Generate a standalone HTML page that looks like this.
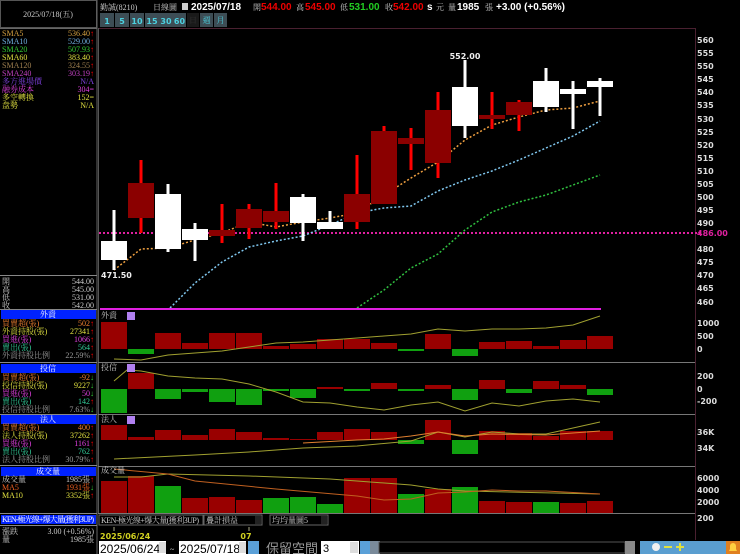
<!DOCTYPE html>
<html><head><meta charset="utf-8"><style>
html,body{margin:0;padding:0;background:#000;width:740px;height:554px;overflow:hidden}
svg{display:block}
.s{font-family:"Liberation Serif","Noto Serif CJK TC","Noto Serif CJK SC",serif;font-size:8px}
.b{font-family:"DejaVu Sans","Liberation Sans",sans-serif;font-size:8px;font-weight:bold}
.h{font-family:"Liberation Sans","Noto Sans CJK TC",sans-serif;font-size:10px;font-weight:bold}
</style></head><body>
<svg width="740" height="554" viewBox="0 0 740 554" xmlns="http://www.w3.org/2000/svg">
<rect width="740" height="554" fill="#000"/>
<rect x="0.5" y="0.5" width="96" height="27" fill="none" stroke="#555"/>
<text x="48" y="17" class="s" fill="#ccc" text-anchor="middle">2025/07/18(五)</text>
<line x1="97" y1="0" x2="97" y2="554" stroke="#666"/>
<line x1="0" y1="28.5" x2="97" y2="28.5" stroke="#666"/>
<g class="s">
<text x="2" y="36" fill="#d4a040">SMA5</text><text x="94" y="36" fill="#d4a040" text-anchor="end">536.40<tspan fill="#f00">↑</tspan></text>
<text x="2" y="44" fill="#70b0e0">SMA10</text><text x="94" y="44" fill="#70b0e0" text-anchor="end">529.00<tspan fill="#f00">↑</tspan></text>
<text x="2" y="52" fill="#3c3">SMA20</text><text x="94" y="52" fill="#3c3" text-anchor="end">507.93<tspan fill="#f00">↑</tspan></text>
<text x="2" y="60" fill="#e0e040">SMA60</text><text x="94" y="60" fill="#e0e040" text-anchor="end">383.40<tspan fill="#f00">↑</tspan></text>
<text x="2" y="68" fill="#a08050">SMA120</text><text x="94" y="68" fill="#a08050" text-anchor="end">324.55<tspan fill="#f00">↑</tspan></text>
<text x="2" y="76" fill="#c040c0">SMA240</text><text x="94" y="76" fill="#c040c0" text-anchor="end">303.19<tspan fill="#f00">↑</tspan></text>
<text x="2" y="84" fill="#8040e0">多方進場價</text><text x="94" y="84" fill="#8040e0" text-anchor="end">N/A</text>
<text x="2" y="92" fill="#e040e0">融券成本</text><text x="94" y="92" fill="#e040e0" text-anchor="end">304=</text>
<text x="2" y="100" fill="#e0e040">多空轉換</text><text x="94" y="100" fill="#e0e040" text-anchor="end">152=</text>
<text x="2" y="108" fill="#e0e040">盘勢</text><text x="94" y="108" fill="#e0e040" text-anchor="end">N/A</text>
</g>
<line x1="0" y1="275.5" x2="97" y2="275.5" stroke="#888"/>
<g class="s" fill="#ccc">
<text x="2" y="284">開</text><text x="94" y="284" text-anchor="end">544.00</text>
<text x="2" y="292">高</text><text x="94" y="292" text-anchor="end">545.00</text>
<text x="2" y="300">低</text><text x="94" y="300" text-anchor="end">531.00</text>
<text x="2" y="308">收</text><text x="94" y="308" text-anchor="end">542.00</text>
</g>
<line x1="0" y1="309.5" x2="97" y2="309.5" stroke="#888"/>
<rect x="1" y="310" width="95" height="9" fill="#0022ff"/>
<text x="48" y="317" class="s" fill="#fff" text-anchor="middle">外資</text>
<g class="s">
<text x="2" y="326" fill="#f08030">買賣超(張)</text><text x="94" y="326" fill="#f08030" text-anchor="end">502<tspan fill="#f00">↑</tspan></text>
<text x="2" y="334" fill="#e0e040">外資持股(張)</text><text x="94" y="334" fill="#e0e040" text-anchor="end">27341<tspan fill="#f00">↑</tspan></text>
<text x="2" y="342" fill="#e040e0">買進(張)</text><text x="94" y="342" fill="#e040e0" text-anchor="end">1066<tspan fill="#f00">↑</tspan></text>
<text x="2" y="350" fill="#3c9">賣出(張)</text><text x="94" y="350" fill="#3c9" text-anchor="end">564<tspan fill="#f00">↑</tspan></text>
<text x="2" y="358" fill="#999">外資持股比例</text><text x="94" y="358" fill="#999" text-anchor="end">22.59%<tspan fill="#f00">↑</tspan></text>
</g>
<line x1="0" y1="362.5" x2="97" y2="362.5" stroke="#888"/>
<rect x="1" y="364" width="95" height="9" fill="#0022ff"/>
<text x="48" y="371" class="s" fill="#fff" text-anchor="middle">投信</text>
<g class="s">
<text x="2" y="380" fill="#f08030">買賣超(張)</text><text x="94" y="380" fill="#f08030" text-anchor="end">-92<tspan fill="#3c3">↓</tspan></text>
<text x="2" y="388" fill="#e0e040">投信持股(張)</text><text x="94" y="388" fill="#e0e040" text-anchor="end">9227<tspan fill="#3c3">↓</tspan></text>
<text x="2" y="396" fill="#e040e0">買進(張)</text><text x="94" y="396" fill="#e040e0" text-anchor="end">50<tspan fill="#3c3">↓</tspan></text>
<text x="2" y="404" fill="#3c9">賣出(張)</text><text x="94" y="404" fill="#3c9" text-anchor="end">142<tspan fill="#f00">↑</tspan></text>
<text x="2" y="412" fill="#999">投信持股比例</text><text x="94" y="412" fill="#999" text-anchor="end">7.63%<tspan fill="#3c3">↓</tspan></text>
</g>
<line x1="0" y1="414.5" x2="97" y2="414.5" stroke="#888"/>
<rect x="1" y="415" width="95" height="9" fill="#0022ff"/>
<text x="48" y="422" class="s" fill="#fff" text-anchor="middle">法人</text>
<g class="s">
<text x="2" y="430" fill="#f08030">買賣超(張)</text><text x="94" y="430" fill="#f08030" text-anchor="end">400<tspan fill="#f00">↑</tspan></text>
<text x="2" y="438" fill="#e0e040">法人持股(張)</text><text x="94" y="438" fill="#e0e040" text-anchor="end">37262<tspan fill="#f00">↑</tspan></text>
<text x="2" y="446" fill="#e040e0">買進(張)</text><text x="94" y="446" fill="#e040e0" text-anchor="end">1161<tspan fill="#f00">↑</tspan></text>
<text x="2" y="454" fill="#3c9">賣出(張)</text><text x="94" y="454" fill="#3c9" text-anchor="end">762<tspan fill="#f00">↑</tspan></text>
<text x="2" y="462" fill="#999">法人持股比例</text><text x="94" y="462" fill="#999" text-anchor="end">30.79%<tspan fill="#f00">↑</tspan></text>
</g>
<line x1="0" y1="465.5" x2="97" y2="465.5" stroke="#888"/>
<rect x="1" y="467" width="95" height="9" fill="#0022ff"/>
<text x="48" y="474" class="s" fill="#fff" text-anchor="middle">成交量</text>
<g class="s">
<text x="2" y="482" fill="#ccc">成交量</text><text x="94" y="482" fill="#ccc" text-anchor="end">1985張<tspan fill="#f00">↑</tspan></text>
<text x="2" y="490" fill="#f06020">MA5</text><text x="94" y="490" fill="#f06020" text-anchor="end">1931張<tspan fill="#3c3">↓</tspan></text>
<text x="2" y="498" fill="#e0e040">MA10</text><text x="94" y="498" fill="#e0e040" text-anchor="end">3352張<tspan fill="#f00">↑</tspan></text>
</g>
<line x1="0" y1="513.5" x2="97" y2="513.5" stroke="#888"/>
<rect x="1" y="515" width="95" height="9" fill="#0022ff"/>
<text x="2" y="522" class="s" fill="#fff" textLength="92">KEN-極光線+爆大量(獲利3UP)</text>
<line x1="0" y1="525.5" x2="97" y2="525.5" stroke="#888"/>
<g class="s" fill="#ccc">
<text x="2" y="534">漲跌</text><text x="94" y="534" text-anchor="end">3.00 (+0.56%)</text>
<text x="2" y="542">量</text><text x="94" y="542" text-anchor="end">1985張</text>
</g>

<g class="s" fill="#ccc">
<text x="100" y="10">勤誠(8210)</text><text x="153" y="10">日線圖</text>
</g>
<rect x="182" y="3" width="6" height="7" fill="#ccc"/>
<text x="191" y="10" class="h" fill="#fff">2025/07/18</text>
<text x="253" y="10" class="s" fill="#ccc">開</text><text x="261" y="10" class="h" fill="#e00">544.00</text>
<text x="296" y="10" class="s" fill="#ccc">高</text><text x="305" y="10" class="h" fill="#e00">545.00</text>
<text x="340" y="10" class="s" fill="#ccc">低</text><text x="349" y="10" class="h" fill="#2c2">531.00</text>
<text x="385" y="10" class="s" fill="#ccc">收</text><text x="393" y="10" class="h" fill="#e00">542.00</text>
<text x="427" y="10" class="h" fill="#fff">s</text><text x="436" y="10" class="s" fill="#ccc">元</text>
<text x="448" y="10" class="s" fill="#ccc">量</text><text x="457" y="10" class="h" fill="#fff">1985</text>
<text x="485" y="10" class="s" fill="#ccc">張</text>
<text x="496" y="10" class="h" fill="#fff">+3.00 (+0.56%)</text>
<g>
<rect x="100" y="13" width="14" height="14" fill="#3d4d55"/>
<rect x="115" y="13" width="14" height="14" fill="#3d4d55"/>
<rect x="130" y="13" width="14" height="14" fill="#3d4d55"/>
<rect x="145" y="13" width="14" height="14" fill="#3d4d55"/>
<rect x="159" y="13" width="14" height="14" fill="#3d4d55"/>
<rect x="173" y="13" width="13" height="14" fill="#3d4d55"/>
<rect x="187" y="13" width="12" height="14" fill="#1a1a1a"/>
<rect x="200" y="13" width="13" height="14" fill="#3d4d55"/>
<rect x="214" y="13" width="13" height="14" fill="#3d4d55"/>
</g>
<g class="b" fill="#4cd0e0" text-anchor="middle" font-size="9">
<text x="107" y="24">1</text><text x="122" y="24">5</text><text x="137" y="24">10</text><text x="152" y="24">15</text><text x="166" y="24">30</text><text x="179.5" y="24">60</text>
</g>
<g class="s" fill="#4cd0e0" text-anchor="middle"><text x="206.5" y="23">週</text><text x="220.5" y="23">月</text></g>
<text x="193" y="23" class="s" fill="#333" text-anchor="middle">日</text>

<line x1="98" y1="28.5" x2="695" y2="28.5" stroke="#4a2030"/>
<line x1="695.5" y1="28" x2="695.5" y2="540" stroke="#4a2030"/>
<line x1="98.5" y1="28" x2="98.5" y2="513" stroke="#555"/>

<g class="b" fill="#ddd">
<text x="697" y="43">560</text><text x="697" y="56">555</text><text x="697" y="69">550</text><text x="697" y="82">545</text><text x="697" y="95">540</text><text x="697" y="108">535</text><text x="697" y="122">530</text><text x="697" y="135">525</text><text x="697" y="148">520</text><text x="697" y="161">515</text><text x="697" y="174">510</text><text x="697" y="187">505</text><text x="697" y="200">500</text><text x="697" y="213">495</text><text x="697" y="226">490</text><text x="697" y="252">480</text><text x="697" y="265">475</text><text x="697" y="278">470</text><text x="697" y="291">465</text><text x="697" y="305">460</text>
</g>
<line x1="99" y1="233" x2="700" y2="233" stroke="#e020a0" stroke-width="2" stroke-dasharray="2 2"/>
<text x="697" y="236" class="b" fill="#e020a0">486.00</text>

<polyline fill="none" stroke="#f0a040" stroke-width="1.5" stroke-dasharray="2 2" points="114,270 141,249 168,248 195,240 222,233 249,222 276,227 303,222 330,218 357,213 384,195 411,178 438,162 465,140 492,125 519,117 546,110 573,108 600,101"/>
<polyline fill="none" stroke="#80c8f0" stroke-width="1.5" stroke-dasharray="2 2" points="170,308 195,283 222,262 249,247 276,241 303,236 330,225 357,213 384,208 411,206 438,191 465,180 492,171 519,160 546,148 573,136 600,121"/>
<polyline fill="none" stroke="#30c040" stroke-width="1.5" stroke-dasharray="2 2" points="357,308 384,290 411,268 438,254 465,230 492,212 519,202 546,195 573,185 600,175"/>
<line x1="100" y1="309" x2="601" y2="309" stroke="#e020e0" stroke-width="2"/>

<g>
<rect x="112.5" y="210" width="3" height="60" fill="#fff"/><rect x="101" y="241" width="26" height="19" fill="#fff"/>
<rect x="139.5" y="160" width="3" height="73" fill="#f00"/><rect x="128" y="183" width="26" height="35" fill="#8b0000"/>
<rect x="166.5" y="184" width="3" height="68" fill="#fff"/><rect x="155" y="194" width="26" height="55" fill="#fff"/>
<rect x="193.5" y="223" width="3" height="38" fill="#fff"/><rect x="182" y="229" width="26" height="11" fill="#fff"/>
<rect x="220.5" y="204" width="3" height="39" fill="#f00"/><rect x="209" y="230" width="26" height="6" fill="#8b0000"/>
<rect x="247.5" y="204" width="3" height="35" fill="#f00"/><rect x="236" y="209" width="26" height="19" fill="#8b0000"/>
<rect x="274.5" y="183" width="3" height="46" fill="#f00"/><rect x="263" y="211" width="26" height="11" fill="#8b0000"/>
<rect x="301.5" y="194" width="3" height="47" fill="#fff"/><rect x="290" y="197" width="26" height="26" fill="#fff"/>
<rect x="328.5" y="211" width="3" height="18" fill="#fff"/><rect x="317" y="222" width="26" height="7" fill="#fff"/>
<rect x="355.5" y="155" width="3" height="74" fill="#f00"/><rect x="344" y="194" width="26" height="28" fill="#8b0000"/>
<rect x="382.5" y="126" width="3" height="78" fill="#f00"/><rect x="371" y="131" width="26" height="73" fill="#8b0000"/>
<rect x="409.5" y="128" width="3" height="42" fill="#f00"/><rect x="398" y="138" width="26" height="6" fill="#8b0000"/>
<rect x="436.5" y="92" width="3" height="86" fill="#f00"/><rect x="425" y="110" width="26" height="53" fill="#8b0000"/>
<rect x="463.5" y="60" width="3" height="78" fill="#fff"/><rect x="452" y="87" width="26" height="39" fill="#fff"/>
<rect x="490.5" y="92" width="3" height="37" fill="#f00"/><rect x="479" y="115" width="26" height="4" fill="#8b0000"/>
<rect x="517.5" y="100" width="3" height="31" fill="#f00"/><rect x="506" y="102" width="26" height="13" fill="#8b0000"/>
<rect x="544.5" y="68" width="3" height="44" fill="#fff"/><rect x="533" y="81" width="26" height="26" fill="#fff"/>
<rect x="571.5" y="81" width="3" height="48" fill="#fff"/><rect x="560" y="89" width="26" height="5" fill="#fff"/>
<rect x="598.5" y="78" width="3" height="38" fill="#fff"/><rect x="587" y="81" width="26" height="6" fill="#fff"/>
</g>
<text x="465" y="59" class="b" fill="#eee" text-anchor="middle">552.00</text>
<text x="101" y="278" class="b" fill="#eee">471.50</text>

<g stroke="#777"><line x1="98" y1="362.5" x2="695" y2="362.5"/><line x1="98" y1="414.5" x2="695" y2="414.5"/><line x1="98" y1="466.5" x2="695" y2="466.5"/><line x1="98" y1="513.5" x2="695" y2="513.5"/></g>

<g fill="#990000">
<rect x="101" y="322" width="26" height="27"/><rect x="155" y="333" width="26" height="16"/><rect x="182" y="343" width="26" height="6"/><rect x="209" y="333" width="26" height="16"/><rect x="236" y="333" width="26" height="16"/><rect x="263" y="346" width="26" height="3"/><rect x="290" y="344" width="26" height="5"/><rect x="317" y="339" width="26" height="10"/><rect x="344" y="339" width="26" height="10"/><rect x="371" y="343" width="26" height="6"/><rect x="425" y="334" width="26" height="15"/><rect x="479" y="342" width="26" height="7"/><rect x="506" y="341" width="26" height="8"/><rect x="533" y="346" width="26" height="3"/><rect x="560" y="340" width="26" height="9"/><rect x="587" y="336" width="26" height="13"/>
</g>
<g fill="#10a010"><rect x="128" y="349" width="26" height="5"/><rect x="398" y="349" width="26" height="2"/><rect x="452" y="349" width="26" height="7"/></g>
<polyline fill="none" stroke="#a0a030" points="114,359 141,360 168,355 195,353 222,351 249,347 276,343 303,342 330,340 357,338 384,336 411,334 438,329 465,331 492,329 519,329 546,328 573,325 600,316"/>
<text x="101" y="318" class="s" fill="#ccc">外資</text><rect x="127" y="312" width="8" height="8" fill="#b080f0"/>
<g class="b" fill="#ddd"><text x="697" y="326">1000</text><text x="697" y="339">500</text><text x="697" y="352">0</text></g>

<g fill="#990000"><rect x="128" y="373" width="26" height="16"/><rect x="317" y="387" width="26" height="2"/><rect x="371" y="383" width="26" height="6"/><rect x="425" y="385" width="26" height="4"/><rect x="479" y="380" width="26" height="9"/><rect x="533" y="381" width="26" height="8"/><rect x="560" y="385" width="26" height="4"/></g>
<g fill="#10a010"><rect x="101" y="389" width="26" height="24"/><rect x="155" y="389" width="26" height="10"/><rect x="182" y="389" width="26" height="3"/><rect x="209" y="389" width="26" height="13"/><rect x="236" y="389" width="26" height="16"/><rect x="263" y="389" width="26" height="2"/><rect x="290" y="389" width="26" height="9"/><rect x="344" y="389" width="26" height="2"/><rect x="398" y="389" width="26" height="2"/><rect x="452" y="389" width="26" height="11"/><rect x="506" y="389" width="26" height="4"/><rect x="587" y="389" width="26" height="6"/></g>
<polyline fill="none" stroke="#a0a030" points="114,381 127,370 141,371 168,376 195,378 222,379 249,384 276,392 303,402 330,403 357,407 384,410 411,405 438,402 465,411 492,403 519,406 546,401 573,399 600,402"/>
<text x="101" y="370" class="s" fill="#ccc">投信</text><rect x="127" y="364" width="8" height="8" fill="#b080f0"/>
<g class="b" fill="#ddd"><text x="697" y="379">200</text><text x="697" y="392">0</text><text x="697" y="404">-200</text></g>

<g fill="#990000"><rect x="101" y="425" width="26" height="15"/><rect x="128" y="437" width="26" height="3"/><rect x="155" y="430" width="26" height="10"/><rect x="182" y="435" width="26" height="5"/><rect x="209" y="429" width="26" height="11"/><rect x="236" y="432" width="26" height="8"/><rect x="263" y="438" width="26" height="2"/><rect x="290" y="439" width="26" height="1"/><rect x="317" y="432" width="26" height="8"/><rect x="344" y="429" width="26" height="11"/><rect x="371" y="432" width="26" height="8"/><rect x="425" y="420" width="26" height="20"/><rect x="479" y="431" width="26" height="9"/><rect x="506" y="433" width="26" height="7"/><rect x="533" y="436" width="26" height="4"/><rect x="560" y="431" width="26" height="9"/><rect x="587" y="431" width="26" height="9"/></g>
<g fill="#10a010"><rect x="398" y="440" width="26" height="4"/><rect x="452" y="440" width="26" height="14"/></g>
<polyline fill="none" stroke="#a0a030" points="114,459 195,455 249,452 303,448 357,446 411,441 438,432 465,437 492,432 519,434 546,434 573,428 600,422"/>
<polyline fill="none" stroke="#e08030" points="303,443 357,440 384,439 411,436 438,432 465,436 492,434 546,435 600,431"/>
<text x="101" y="422" class="s" fill="#ccc">法人</text><rect x="127" y="416" width="8" height="8" fill="#b080f0"/>
<g class="b" fill="#ddd"><text x="697" y="435">36K</text><text x="697" y="451">34K</text></g>

<g fill="#990000"><rect x="101" y="481" width="26" height="32"/><rect x="128" y="476" width="26" height="37"/><rect x="182" y="498" width="26" height="15"/><rect x="209" y="497" width="26" height="16"/><rect x="236" y="500" width="26" height="13"/><rect x="344" y="478" width="26" height="35"/><rect x="371" y="478" width="26" height="35"/><rect x="425" y="489" width="26" height="24"/><rect x="479" y="501" width="26" height="12"/><rect x="506" y="502" width="26" height="11"/><rect x="560" y="503" width="26" height="10"/><rect x="587" y="501" width="26" height="12"/></g>
<g fill="#10a010"><rect x="155" y="486" width="26" height="27"/><rect x="263" y="498" width="26" height="15"/><rect x="290" y="497" width="26" height="16"/><rect x="317" y="504" width="26" height="9"/><rect x="398" y="494" width="26" height="19"/><rect x="452" y="487" width="26" height="26"/><rect x="533" y="502" width="26" height="11"/></g>
<polyline fill="none" stroke="#a0a030" points="114,477 141,477 168,474 249,476 330,479 411,485 438,489 465,491 600,494"/>
<polyline fill="none" stroke="#c06020" points="114,469 168,474 195,481 276,489 357,496 384,500 411,499 438,493 465,492 492,490 519,491 546,491 600,494"/>
<text x="101" y="473" class="s" fill="#ccc">成交量</text>
<g class="b" fill="#ddd"><text x="697" y="481">6000</text><text x="697" y="493">4000</text><text x="697" y="505">2000</text><text x="697" y="521">200</text></g>

<rect x="98" y="514" width="597" height="12" fill="#000"/>
<rect x="99" y="515" width="104" height="10" fill="none" stroke="#666"/>
<text x="101" y="523" class="s" fill="#ccc" textLength="98">KEN-極光線+爆大量(獲利3UP)</text>
<rect x="204" y="515" width="58" height="10" fill="none" stroke="#666"/>
<text x="206" y="523" class="s" fill="#ccc">疊計損益</text><rect x="255" y="516" width="6" height="8" fill="#222"/>
<rect x="270" y="515" width="58" height="10" fill="none" stroke="#666"/>
<text x="272" y="523" class="s" fill="#ccc">均均量圖5</text><rect x="321" y="516" width="6" height="8" fill="#222"/>
<line x1="114" y1="527" x2="114" y2="531" stroke="#aa8"/><line x1="249" y1="527" x2="249" y2="531" stroke="#aa8"/>
<text x="100" y="539" class="b" fill="#d0d020">2025/06/24</text>
<text x="246" y="539" class="b" fill="#d0d020" text-anchor="middle">07</text>
<rect x="99" y="541" width="67" height="13" fill="#fff"/>
<text x="100" y="553" font-family="Liberation Sans,sans-serif" font-size="12" fill="#000">2025/06/24</text>
<rect x="159" y="542" width="7" height="11" fill="#ddd"/>
<text x="170" y="552" class="s" fill="#ccc">~</text>
<rect x="179" y="541" width="67" height="13" fill="#fff"/>
<text x="180" y="553" font-family="Liberation Sans,sans-serif" font-size="12" fill="#000">2025/07/18</text>
<rect x="239" y="542" width="7" height="11" fill="#ddd"/>
<rect x="248" y="541" width="11" height="13" fill="#5aa0d8"/>
<text x="266" y="553" font-family="Liberation Sans,'Noto Sans CJK TC',sans-serif" font-size="13" fill="#999">保留空間</text>
<rect x="321" y="541" width="38" height="13" fill="#fff"/>
<text x="323" y="552" font-family="Liberation Sans,sans-serif" font-size="11" fill="#000">3</text>
<rect x="350" y="542" width="8" height="11" fill="#ddd"/>
<rect x="360" y="541" width="11" height="13" fill="#5aa0d8"/>
<rect x="370" y="541" width="10" height="13" fill="#7a8a9a"/>
<rect x="379" y="542" width="246" height="11" fill="#000" stroke="#555"/>
<rect x="625" y="541" width="10" height="13" fill="#888"/>
<rect x="640" y="541" width="100" height="13" fill="#5a9ed0"/>
<g fill="#fff"><circle cx="656" cy="547" r="4" fill="#f0f0f0"/><rect x="664" y="546" width="8" height="2" fill="#e0e040"/><rect x="676" y="546" width="8" height="2" fill="#e0e040"/><rect x="679" y="543" width="2" height="8" fill="#e0e040"/></g>
<rect x="726" y="541" width="14" height="13" fill="#e08020"/>
<path d="M729 551 h8 l-1-2 v-3 a3 3 0 0 0 -6 0 v3 z" fill="#ffd040"/>
</svg>
</body></html>
